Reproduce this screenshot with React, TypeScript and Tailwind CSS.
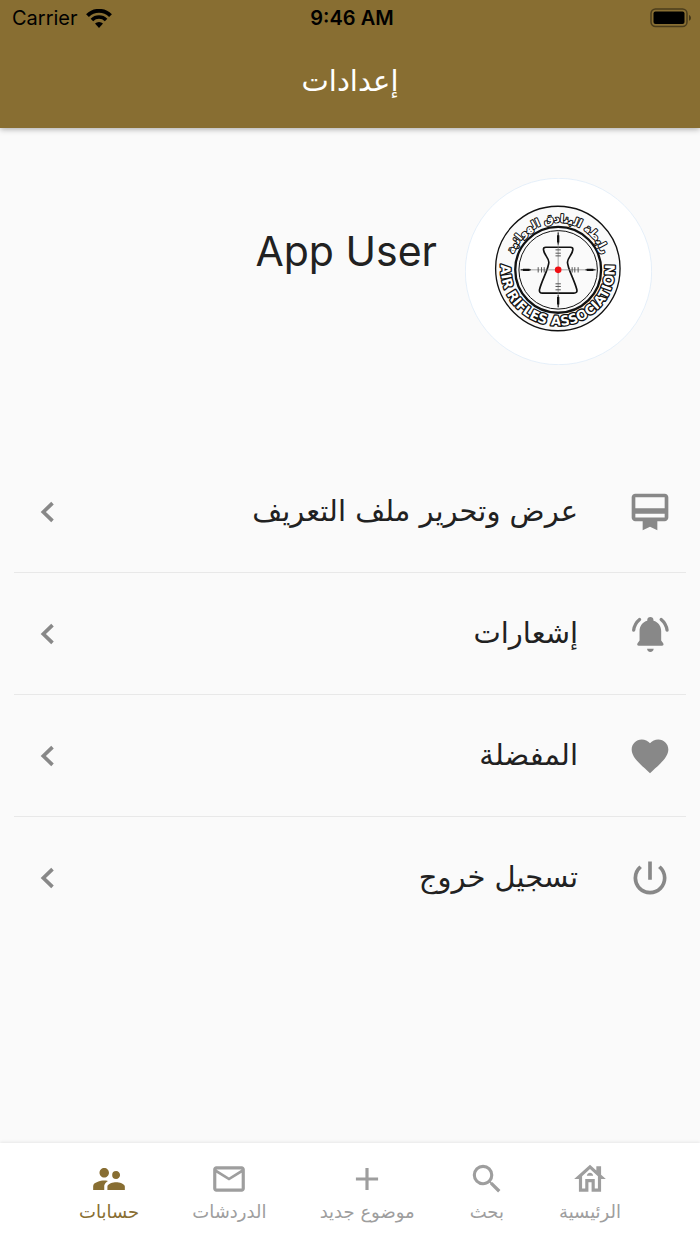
import type { IconType } from 'react-icons';
import {
  MdAdd,
  MdCardMembership,
  MdFavorite,
  MdMailOutline,
  MdOutlineHouse,
  MdPowerSettingsNew,
  MdSearch,
  MdSupervisorAccount,
} from 'react-icons/md';

function BellIcon({ className }: { className?: string }) {
  return (
    <svg viewBox="0 0 24 24" className={className} fill="currentColor">
      <path d="M12.200 2.700c-1 0-1.700.7-1.700 1.700v.4C7.900 5.500 6.300 7.700 6.300 10.400v5.200l-1 1.300c-.6.8-.2 1.500.6 1.500h12.600c.8 0 1.200-.7.6-1.500l-1-1.300v-5.200c0-2.700-1.600-4.900-4.200-5.600v-.4c0-1-.7-1.700-1.700-1.700z" />
      <path d="M10.400 20h3.600c0 1-.8 1.800-1.800 1.800s-1.800-.8-1.800-1.800z" />
      <path
        d="M6.300 4.100c-1.800 1.500-2.900 3.500-3.200 5.800M18.100 4.100c1.800 1.500 2.900 3.500 3.200 5.800"
        fill="none"
        stroke="currentColor"
        strokeWidth="1.800"
        strokeLinecap="round"
      />
    </svg>
  );
}

function ChevronIcon({ className }: { className?: string }) {
  return (
    <svg viewBox="0 0 24 24" className={className} fill="none" stroke="currentColor" strokeWidth="2.200">
      <path d="M14.700 6.700 9.200 12l5.500 5.300" />
    </svg>
  );
}

const settings: { label: string; icon: IconType | typeof BellIcon }[] = [
  { label: 'عرض وتحرير ملف التعريف', icon: MdCardMembership },
  { label: 'إشعارات', icon: BellIcon },
  { label: 'المفضلة', icon: MdFavorite },
  { label: 'تسجيل خروج', icon: MdPowerSettingsNew },
];

const tabs: { label: string; icon: IconType; active?: boolean }[] = [
  { label: 'الرئيسية', icon: MdOutlineHouse },
  { label: 'بحث', icon: MdSearch },
  { label: 'موضوع جديد', icon: MdAdd },
  { label: 'الدردشات', icon: MdMailOutline },
  { label: 'حسابات', icon: MdSupervisorAccount, active: true },
];

function StatusBar() {
  return (
    <div
      dir="ltr"
      className="grid h-9 grid-cols-3 items-center pl-3 pr-2 font-['Inter',sans-serif] text-xl text-black"
    >
      <div className="flex items-center gap-2">
        <span>Carrier</span>
        <svg viewBox="0 0 26 19" className="h-[19px] w-[26px]" fill="none" stroke="currentColor">
          <path d="M1.5 6.6a16.3 16.3 0 0 1 23 0" strokeWidth="4" />
          <path d="M5.9 11a10 10 0 0 1 14.2 0" strokeWidth="3.6" />
          <path d="M9 14.6a5.700 5.700 0 0 1 8 0L13 19z" fill="currentColor" stroke="none" />
        </svg>
      </div>
      <span className="text-center font-semibold">9:46 AM</span>
      <svg viewBox="0 0 42 20" className="h-5 w-[42px] justify-self-end">
        <rect x="1" y="1" width="36" height="17.500" rx="4.500" fill="none" stroke="#000" strokeOpacity=".45" strokeWidth="1.500" />
        <rect x="3.500" y="3.500" width="31" height="12.500" rx="2" />
        <path d="M39 7c2.600.8 2.600 5 0 5.800z" fillOpacity=".5" />
      </svg>
    </div>
  );
}

function Logo() {
  const ticks = [-60, -50, -42, 42, 50, 60];

  return (
    <svg viewBox="15 24 562 562" className="size-[187px] shrink-0" role="img" aria-label="Air Rifles Association">
      <defs>
        <path id="ring-top" d="M154 297a140 140 0 0 1 280 0" />
        <path id="ring-bottom" d="M167 182a171 171 0 1 0 254 0" />
      </defs>
      <circle cx="296" cy="305" r="280" fill="#fff" stroke="#d9e8f7" strokeWidth="2" />
      <g fill="#fafafa" stroke="#111">
        <circle cx="294" cy="296" r="187" strokeWidth="4" />
        <circle cx="295" cy="300" r="129" strokeWidth="7" />
        <circle cx="295" cy="300" r="118" strokeWidth="3" />
      </g>
      <g fill="#fff" stroke="#111" paintOrder="stroke" strokeLinejoin="round" className="font-['DejaVu_Sans',sans-serif] font-bold">
        <text fontSize="33" strokeWidth="6" direction="rtl" textAnchor="middle">
          <textPath href="#ring-top" startOffset="50%">رابطة البنادق الهوائية</textPath>
        </text>
        <text fontSize="40" strokeWidth="8" direction="ltr" textAnchor="middle">
          <textPath href="#ring-bottom" startOffset="50%">AIR RIFLES ASSOCIATION</textPath>
        </text>
      </g>
      <g transform="translate(295 300)" stroke="#111" fill="none">
        <path
          d="M-37-68h74q8 0 7 8c-1 14-16 24-16 37 0 18 20 52 28 82 2 8-2 11-9 11H-47q-11 0-9-11c8-30 28-64 28-82 0-13-15-23-16-37q-1-8 7-8z"
          strokeWidth="5"
        />
        <path d="M-118 0H118M0-118V118" strokeWidth="2" stroke="#777" />
        <path d="M-112 0h30M112 0h-30M0-112v36M0 112v-36" strokeWidth="3" />
        <path d="M-106 0h20M106 0h-20M0-104v22M0 104v-22" strokeWidth="7" />
        {ticks.map((t) => (
          <path key={t} d={`M${t}-8v16M-8 ${t}h16`} strokeWidth="3" stroke="#555" />
        ))}
        <circle r="10" fill="#f00d12" stroke="none" />
      </g>
    </svg>
  );
}

export default function App() {
  return (
    <div
      dir="rtl"
      className="flex min-h-screen flex-col bg-[#fafafa] font-['DejaVu_Sans',sans-serif] text-[#212121]"
    >
      <header className="bg-[#886e32] shadow-[0_1px_6px_rgba(0,0,0,0.35)]">
        <StatusBar />
        <h1 className="flex h-[92px] items-center justify-center text-[29px] text-white">إعدادات</h1>
      </header>

      <main className="grow">
        <section className="flex items-start gap-7 px-12 pt-[50px]">
          <Logo />
          <h2 dir="ltr" className="pt-12 font-['Inter',sans-serif] text-[41px] leading-[50px]">
            App User
          </h2>
        </section>

        <ul className="mt-[86px] divide-y divide-[#e8e8e8] px-3.5">
          {settings.map(({ label, icon: Icon }) => (
            <li key={label}>
              <button type="button" className="flex h-[121px] w-full items-center px-3.5 text-start">
                <Icon className="size-11 shrink-0 text-[#888]" />
                <span className="mr-[50px] grow text-[29px]">{label}</span>
                <ChevronIcon className="size-10 shrink-0 text-[#888]" />
              </button>
            </li>
          ))}
        </ul>
      </main>

      <nav className="flex h-[101px] justify-between bg-white px-[79px] pt-[17px] shadow-[0_-1px_3px_rgba(0,0,0,0.08)]">
        {tabs.map(({ label, icon: Icon, active }) => (
          <button
            key={label}
            type="button"
            aria-current={active ? 'page' : undefined}
            className={`flex flex-col items-center text-lg ${active ? 'text-[#886e32]' : 'text-[#9e9e9e]'}`}
          >
            <Icon className="size-[38px]" />
            <span>{label}</span>
          </button>
        ))}
      </nav>
    </div>
  );
}
